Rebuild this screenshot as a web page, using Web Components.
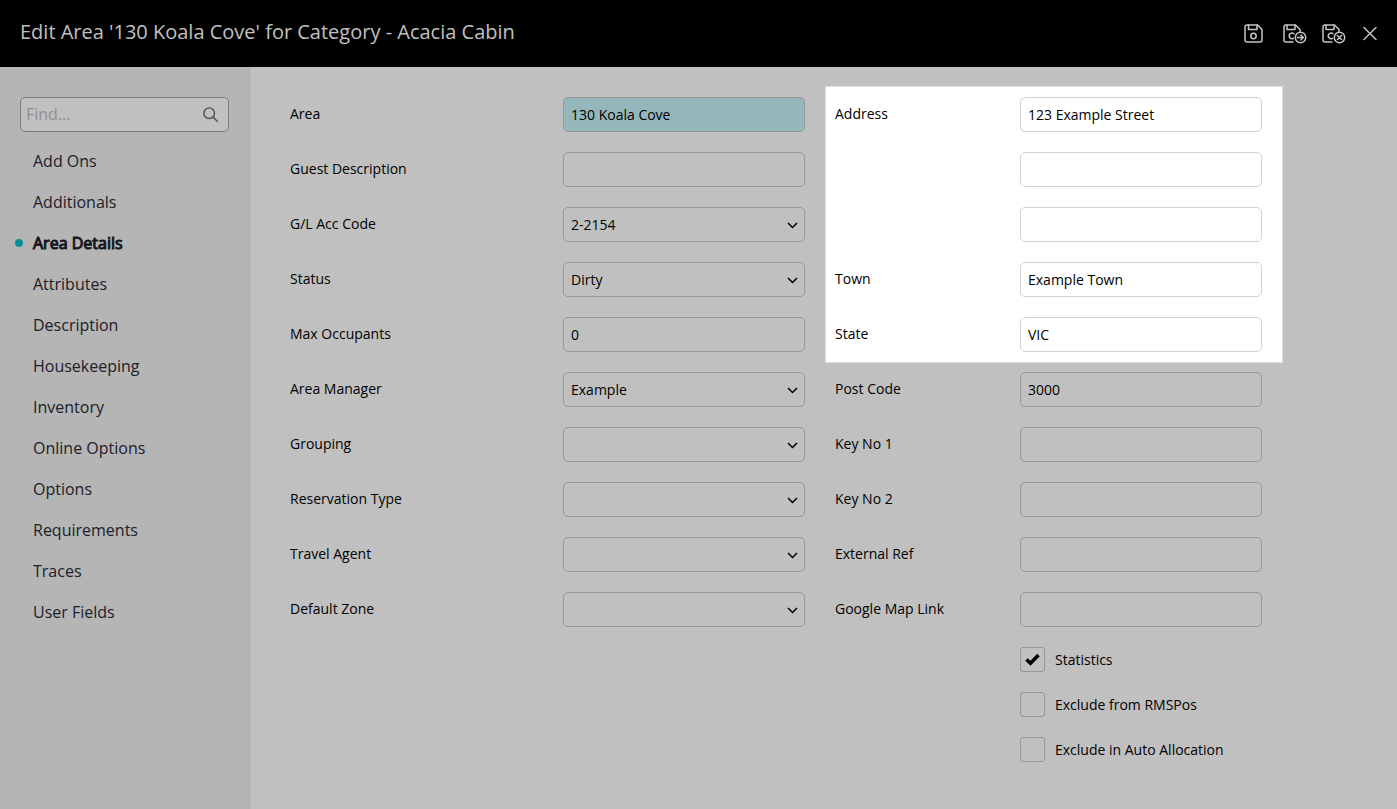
<!DOCTYPE html>
<html lang="en">
<head>
<meta charset="utf-8">
<meta name="viewport" content="width=device-width, initial-scale=1">
<title>Edit Area</title>
<style>
  html, body { margin: 0; min-height: 100%; }
  body { font-family: "Open Sans", "Noto Sans", sans-serif; font-size: 14px; color: #000; background: #c0c0c0; }
</style>
</head>
<body>
<area-editor></area-editor>

<script>
const define = (name, html, setup) => {
  const template = document.createElement("template");
  template.innerHTML = html;
  customElements.define(name, class extends HTMLElement {
    constructor() {
      super();
      this.attachShadow({ mode: "open" }).append(template.content.cloneNode(true));
    }
    connectedCallback() {
      if (this.ready) return;
      this.ready = true;
      if (setup) setup(this, this.shadowRoot);
    }
  });
};

const disk = `
  <path d="M3 1H13.5L18 5.5V16a2 2 0 0 1-2 2H3a2 2 0 0 1-2-2V3a2 2 0 0 1 2-2Z"/>
  <path d="M4.500 1V5.500H13V1"/>
  <circle cx="9.500" cy="12" r="2.700"/>`;
const diskCut = `
  <path d="M10 18H3a2 2 0 0 1-2-2V3a2 2 0 0 1 2-2H12.500L17 5.500V7.500"/>
  <path d="M4 1V5.500H12V1"/>
  <path d="M11 9.800A2.800 2.800 0 1 0 10.500 14.300"/>
  <circle cx="17.500" cy="13.500" r="5.200"/>`;
const icons = {
  save: { w: 24, body: `<g transform="translate(2 2)">${disk}</g>` },
  saveNext: { w: 26, body: `<g transform="translate(2 2)">${diskCut}<path d="M14.500 13.500H20M17.800 11L20.300 13.500L17.800 16"/></g>` },
  saveClose: { w: 26, body: `<g transform="translate(0 2)">${diskCut}<path d="M15.500 11.500L19.500 15.500M19.500 11.500L15.500 15.500"/></g>` },
  close: { w: 14, body: `<path d="M1 5.500L13 17.500M13 5.500L1 17.500"/>` }
};

define("icon-button", `
  <style>
    :host { display: block; }
    button { display: block; padding: 0; border: 0; background: none; color: #c4c4c4; cursor: pointer; }
    svg { display: block; fill: none; stroke: currentColor; stroke-width: 1.5; stroke-linejoin: round; stroke-linecap: round; }
  </style>
  <button type="button"></button>`,
  (host, root) => {
    const { w, body } = icons[host.getAttribute("icon")];
    const button = root.querySelector("button");
    button.setAttribute("aria-label", host.getAttribute("label"));
    button.innerHTML = `<svg width="${w}" height="23" viewBox="0 0 ${w} 23" aria-hidden="true">${body}</svg>`;
  });

define("dialog-header", `
  <style>
    :host { display: block; background: #000; color: #c0c0c0; }
    header { display: flex; align-items: center; justify-content: space-between; gap: 20px; padding: 0 20px; min-height: 67px; }
    h1 { margin: 0; padding-bottom: 3px; font-size: 20px; line-height: 28px; font-weight: 400; }
    .actions { display: flex; gap: 15px; }
  </style>
  <header>
    <h1><slot></slot></h1>
    <div class="actions"><slot name="actions"></slot></div>
  </header>`);

define("nav-item", `
  <style>
    :host { display: block; }
    a { display: flex; align-items: center; gap: 10px; height: 41px; padding-left: 15px; color: #20202a; font-size: 16px; text-decoration: none; }
    a::before { content: ""; flex: none; width: 8px; height: 8px; border-radius: 50%; }
    :host([current]) a { color: #16161f; -webkit-text-stroke: 1px #16161f; }
    :host([current]) a::before { background: #078f99; }
  </style>
  <a href="#"><slot></slot></a>`,
  (host, root) => {
    if (host.hasAttribute("current")) root.querySelector("a").setAttribute("aria-current", "page");
  });

define("side-nav", `
  <style>
    :host { display: block; box-sizing: border-box; padding-top: 30px; background: #b5b5b5; border-right: 1px solid #adadad; }
    label { display: flex; align-items: center; box-sizing: border-box; height: 35px; margin: 0 20px 8px; padding: 0 10px 0 5px; border: 1px solid #7c7c7c; border-radius: 5px; background: #c0c0c0; }
    input { flex: 1; min-width: 0; padding: 0 0 2px; border: 0; outline: 0; background: none; font: inherit; font-size: 16px; color: #000; }
    input::placeholder { color: #929292; opacity: 1; }
    svg { flex: none; fill: none; stroke: #4c4c4c; stroke-width: 1.4; stroke-linecap: round; }
  </style>
  <label>
    <input type="text" placeholder="Find..." aria-label="Find">
    <svg width="15" height="15" viewBox="0 0 15 15" aria-hidden="true"><circle cx="6.200" cy="6.200" r="5.300"/><path d="M10 10L14.200 14.200"/></svg>
  </label>
  <nav><slot></slot></nav>`);

define("form-field", `
  <style>
    :host { display: grid; grid-template-columns: var(--label-width) minmax(0, 242px); min-height: 35px; }
    label { line-height: 34px; }
    .control { display: grid; align-items: center; }
    input, select { grid-area: 1 / 1; box-sizing: border-box; width: 100%; height: 35px; margin: 0; padding: 0 7px; border: 1px solid var(--field-border, #979797); border-radius: 5px; background: var(--field-fill, transparent); color: #000; font: inherit; appearance: none; }
    :host([required]) input { background: #95b7bb; }
    svg { grid-area: 1 / 1; justify-self: end; margin-right: 7px; pointer-events: none; fill: none; stroke: #000; stroke-width: 1.5; }
  </style>
  <label for="control"></label>
  <div class="control"></div>`,
  (host, root) => {
    const label = root.querySelector("label");
    const value = host.getAttribute("value") || "";
    const isSelect = host.hasAttribute("select");
    const control = document.createElement(isSelect ? "select" : "input");
    control.id = "control";
    if (isSelect) control.add(new Option(value, value));
    else { control.type = "text"; control.value = value; }
    if (host.hasAttribute("label")) label.textContent = host.getAttribute("label");
    else control.setAttribute("aria-label", host.getAttribute("hint"));
    const box = root.querySelector(".control");
    box.append(control);
    if (isSelect) box.insertAdjacentHTML("beforeend",
      `<svg width="11" height="9" viewBox="0 0 11 9" aria-hidden="true"><path d="M1 3L5.500 7.500L10 3"/></svg>`);
  });

define("check-field", `
  <style>
    :host { display: block; }
    label { display: flex; align-items: center; gap: 10px; }
    .box { display: grid; place-items: center; flex: none; }
    input { grid-area: 1 / 1; box-sizing: border-box; width: 25px; height: 25px; margin: 0; border: 1px solid #979797; border-radius: 3px; appearance: none; }
    svg { grid-area: 1 / 1; visibility: hidden; pointer-events: none; fill: none; stroke: #000; stroke-width: 3.6; }
    input:checked + svg { visibility: visible; }
  </style>
  <label>
    <span class="box"><input type="checkbox"><svg width="15" height="13" viewBox="0 0 15 13" aria-hidden="true"><path d="M1.500 6.500L5.500 10.200L13.500 2"/></svg></span>
    <span><slot></slot></span>
  </label>`,
  (host, root) => { root.querySelector("input").checked = host.hasAttribute("checked"); });

define("field-group", `
  <style>
    :host { display: grid; gap: 20px; box-sizing: border-box; padding: 10px 20px 10px 10px; }
    :host([spotlight]) { background: #fff; box-shadow: 0 1px #dedede, 0 -1px #dedede, inset 1px 0 #dedede, inset -1px 0 #dedede; --field-border: #d2d2d2; --field-fill: #fff; }
    :host([checks]) { padding-left: 195px; }
  </style>
  <slot></slot>`);

define("area-editor", `
  <style>
    :host { display: grid; grid-template-rows: auto 1fr; min-height: 100vh; }
    .body { display: grid; grid-template-columns: 250px minmax(0, 1fr); }
    main { display: grid; grid-template-columns: minmax(0, 545px) minmax(0, 458px); align-content: start; padding: 20px 20px 20px 30px; }
    .left { --label-width: minmax(0, 273px); }
    .right { --label-width: minmax(0, 185px); }
  </style>
  <dialog-header>
    Edit Area '130 Koala Cove' for Category - Acacia Cabin
    <icon-button slot="actions" icon="save" label="Save"></icon-button>
    <icon-button slot="actions" icon="saveNext" label="Save and next"></icon-button>
    <icon-button slot="actions" icon="saveClose" label="Save and close"></icon-button>
    <icon-button slot="actions" icon="close" label="Close"></icon-button>
  </dialog-header>
  <div class="body">
    <side-nav>
      <nav-item>Add Ons</nav-item>
      <nav-item>Additionals</nav-item>
      <nav-item current>Area Details</nav-item>
      <nav-item>Attributes</nav-item>
      <nav-item>Description</nav-item>
      <nav-item>Housekeeping</nav-item>
      <nav-item>Inventory</nav-item>
      <nav-item>Online Options</nav-item>
      <nav-item>Options</nav-item>
      <nav-item>Requirements</nav-item>
      <nav-item>Traces</nav-item>
      <nav-item>User Fields</nav-item>
    </side-nav>
    <main>
      <div class="left">
        <field-group>
          <form-field label="Area" value="130 Koala Cove" required></form-field>
          <form-field label="Guest Description"></form-field>
          <form-field label="G/L Acc Code" value="2-2154" select></form-field>
          <form-field label="Status" value="Dirty" select></form-field>
          <form-field label="Max Occupants" value="0"></form-field>
          <form-field label="Area Manager" value="Example" select></form-field>
          <form-field label="Grouping" select></form-field>
          <form-field label="Reservation Type" select></form-field>
          <form-field label="Travel Agent" select></form-field>
          <form-field label="Default Zone" select></form-field>
        </field-group>
      </div>
      <div class="right">
        <field-group spotlight>
          <form-field label="Address" value="123 Example Street"></form-field>
          <form-field hint="Address line 2"></form-field>
          <form-field hint="Address line 3"></form-field>
          <form-field label="Town" value="Example Town"></form-field>
          <form-field label="State" value="VIC"></form-field>
        </field-group>
        <field-group>
          <form-field label="Post Code" value="3000"></form-field>
          <form-field label="Key No 1"></form-field>
          <form-field label="Key No 2"></form-field>
          <form-field label="External Ref"></form-field>
          <form-field label="Google Map Link"></form-field>
        </field-group>
        <field-group checks>
          <check-field checked>Statistics</check-field>
          <check-field>Exclude from RMSPos</check-field>
          <check-field>Exclude in Auto Allocation</check-field>
        </field-group>
      </div>
    </main>
  </div>`);
</script>
</body>
</html>
